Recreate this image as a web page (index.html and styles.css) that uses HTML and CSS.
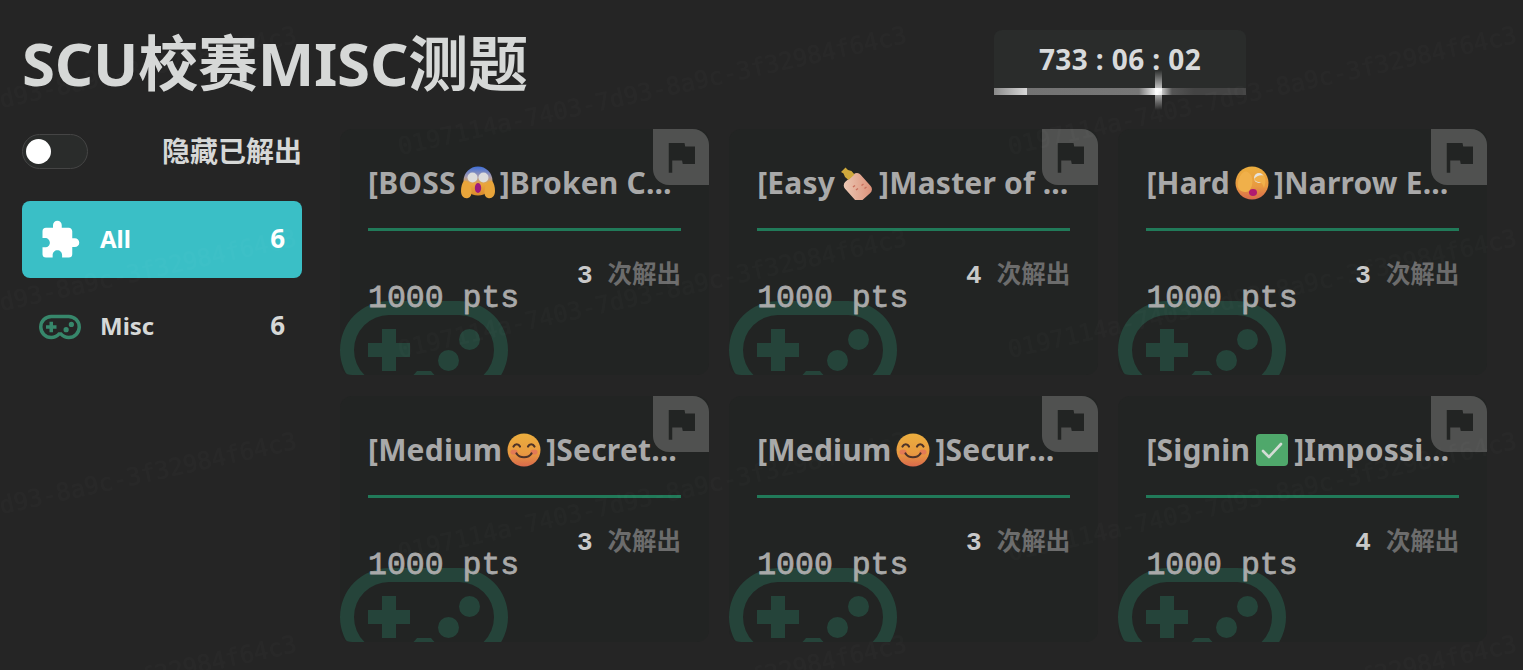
FILE: index.html
```html
<!DOCTYPE html>
<html lang="zh-CN">
  <head>
    <meta charset="utf-8" />
    <title>SCU校赛MISC测题</title>
    <link rel="stylesheet" href="styles.css">
  </head>

  <body>
    <!-- shared icons and emoji -->
    <svg class="defs" width="0" height="0" aria-hidden="true">
      <defs>
        <linearGradient id="g-scream" x1="0" y1="0" x2="0" y2="1">
          <stop offset="0" stop-color="#3f6fd8" />
          <stop offset="0.35" stop-color="#a59bb0" />
          <stop offset="0.6" stop-color="#eaa63f" />
          <stop offset="1" stop-color="#d98a2c" />
        </linearGradient>
        <linearGradient id="g-face" x1="0" y1="0" x2="0" y2="1">
          <stop offset="0" stop-color="#ecae3e" />
          <stop offset="0.6" stop-color="#e89a40" />
          <stop offset="1" stop-color="#d9694c" />
        </linearGradient>
        <linearGradient id="g-bottle" x1="0" y1="0" x2="1" y2="1">
          <stop offset="0" stop-color="#ecccb8" />
          <stop offset="1" stop-color="#dc8d75" />
        </linearGradient>
        <symbol id="i-gamepad" viewBox="0 0 24 24">
          <path d="M6,9H8V11H10V13H8V15H6V13H4V11H6V9M18.5,9A1.5,1.5 0 0,1 20,10.5A1.5,1.5 0 0,1 18.5,12A1.5,1.5 0 0,1 17,10.5A1.5,1.5 0 0,1 18.5,9M15.5,12A1.5,1.5 0 0,1 17,13.5A1.5,1.5 0 0,1 15.5,15A1.5,1.5 0 0,1 14,13.5A1.5,1.5 0 0,1 15.5,12M17,5A7,7 0 0,1 24,12A7,7 0 0,1 17,19C15.04,19 13.27,18.2 12,16.9C10.73,18.2 8.96,19 7,19A7,7 0 0,1 0,12A7,7 0 0,1 7,5H17M7,7A5,5 0 0,0 2,12A5,5 0 0,0 7,17C8.64,17 10.09,16.21 11,15H13C13.91,16.21 15.36,17 17,17A5,5 0 0,0 22,12A5,5 0 0,0 17,7H7Z" fill="currentColor" />
        </symbol>
        <symbol id="i-flag" viewBox="0 0 24 24">
          <path d="M14.4,6L14,4H5V21H7V14H12.6L13,16H20V6H14.4Z" fill="currentColor" />
        </symbol>
        <symbol id="e-scream" viewBox="0 0 34 34">
          <circle cx="17" cy="15" r="14.5" fill="url(#g-scream)" />
          <circle cx="11.5" cy="11.5" r="5" fill="#dcdcdc" />
          <circle cx="22.5" cy="11.5" r="5" fill="#dcdcdc" />
          <ellipse cx="17" cy="22" rx="3.2" ry="5" fill="#9c1a7e" />
          <path d="M3 15c3-1 6 2 7 7 1 4 1 9-3 10-4 1-7-2-7-7 0-4 1-8 3-10zM31 15c-3-1-6 2-7 7-1 4-1 9 3 10 4 1 7-2 7-7 0-4-1-8-3-10z" fill="#e8a53a" />
        </symbol>
        <symbol id="e-bottle" viewBox="0 0 34 34">
          <rect x="7" y="9" width="21" height="25" rx="5" transform="rotate(-42 17.5 21)" fill="url(#g-bottle)" />
          <path d="M1 6 5.5 1.5 8 4l3.5 1 3 3.5-6 5.5-3.5-3-1.5-3.5z" fill="#cfa93c" />
          <path d="M13 21l2-1.5M16 24l2-1.5M21.5 19.5l2-1.5M24.5 22.5l2-1.5" stroke="#c96f5d" stroke-width="1.4" />
        </symbol>
        <symbol id="e-peek" viewBox="0 0 34 34">
          <circle cx="17" cy="17" r="16.5" fill="url(#g-face)" />
          <circle cx="24" cy="12" r="5" fill="#e5e2dc" />
          <circle cx="24.5" cy="13.5" r="2.2" fill="#4a3a30" />
          <ellipse cx="18" cy="26.5" rx="4" ry="3.4" fill="#b01a70" />
          <path d="M3 21c-1-5 2-13 6-15 2-1 4 0 5 1 3 2 4 7 3 12-1 4-3 7-6 7-3 0-7-1-8-5z" fill="#f0b04a" />
          <path d="M19 13c3-4 9-5 11-2 1 3 0 8-1 11-1-4-3-6-5-6-2 0-4-1-5-3z" fill="#f0b04a" />
        </symbol>
        <symbol id="e-smile" viewBox="0 0 34 34">
          <circle cx="17" cy="17" r="16.5" fill="url(#g-face)" />
          <ellipse cx="7" cy="19" rx="3.6" ry="2.6" fill="#de5f66" opacity="0.55" />
          <ellipse cx="27" cy="19" rx="3.6" ry="2.6" fill="#de5f66" opacity="0.55" />
          <path d="M6.5 13.5c1.5-3 5-3 6.5 0M21 13.5c1.5-3 5-3 6.5 0M9.5 20.5c3 5 12 5 15 0" fill="none" stroke="#4d3328" stroke-width="2.2" stroke-linecap="round" />
        </symbol>
        <symbol id="e-check" viewBox="0 0 34 34">
          <rect x="1" y="1" width="32" height="32" rx="4" fill="#4fa86b" />
          <path d="M8 18l6 6L26 11" fill="none" stroke="#d3dcd5" stroke-width="2.6" stroke-linecap="round" stroke-linejoin="round" />
        </symbol>
      </defs>
    </svg>

    <header class="top">
      <h1 class="page-title">SCU校赛MISC测题</h1>
      <div class="timer">
        <div class="timer-text">733 : 06 : 02</div>
        <div class="timer-bar"><span class="spark"></span></div>
      </div>
    </header>

    <main class="layout">
      <aside class="sidebar">
        <div class="hide-solved">
          <span class="toggle"><span class="thumb"></span></span>
          <span class="hide-label">隐藏已解出</span>
        </div>
        <nav class="cats">
          <a class="cat active">
            <svg class="cat-icon" viewBox="0 0 24 24"><path d="M20.5,11H19V7C19,5.89 18.1,5 17,5H13V3.5A2.5,2.5 0 0,0 10.5,1A2.5,2.5 0 0,0 8,3.5V5H4A2,2 0 0,0 2,7V10.8H3.5C5,10.8 6.2,12 6.2,13.5C6.2,15 5,16.2 3.5,16.2H2V20A2,2 0 0,0 4,22H7.8V20.5C7.8,19 9,17.8 10.5,17.8C12,17.8 13.2,19 13.2,20.5V22H17A2,2 0 0,0 19,20V16H20.5A2.5,2.5 0 0,0 23,13.5A2.5,2.5 0 0,0 20.5,11Z" fill="currentColor" /></svg>
            <span class="cat-name">All</span>
            <span class="cat-count">6</span>
          </a>
          <a class="cat">
            <svg class="cat-icon green"><use href="#i-gamepad" /></svg>
            <span class="cat-name">Misc</span>
            <span class="cat-count">6</span>
          </a>
        </nav>
      </aside>

      <section class="cards">
        <article class="card">
          <svg class="card-bg"><use href="#i-gamepad" /></svg>
          <div class="flag"><svg class="flag-icon"><use href="#i-flag" /></svg></div>
          <div class="card-body">
            <div class="card-title">[BOSS<svg class="emoji"><use href="#e-scream" /></svg>]Broken Chat</div>
            <div class="card-stats">
              <span class="pts">1000 pts</span>
              <span class="solves"><b>3</b>次解出</span>
            </div>
          </div>
        </article>

        <article class="card">
          <svg class="card-bg"><use href="#i-gamepad" /></svg>
          <div class="flag"><svg class="flag-icon"><use href="#i-flag" /></svg></div>
          <div class="card-body">
            <div class="card-title">[Easy<svg class="emoji"><use href="#e-bottle" /></svg>]Master of Stego</div>
            <div class="card-stats">
              <span class="pts">1000 pts</span>
              <span class="solves"><b>4</b>次解出</span>
            </div>
          </div>
        </article>

        <article class="card">
          <svg class="card-bg"><use href="#i-gamepad" /></svg>
          <div class="flag"><svg class="flag-icon"><use href="#i-flag" /></svg></div>
          <div class="card-body">
            <div class="card-title">[Hard<svg class="emoji"><use href="#e-peek" /></svg>]Narrow Escape</div>
            <div class="card-stats">
              <span class="pts">1000 pts</span>
              <span class="solves"><b>3</b>次解出</span>
            </div>
          </div>
        </article>

        <article class="card">
          <svg class="card-bg"><use href="#i-gamepad" /></svg>
          <div class="flag"><svg class="flag-icon"><use href="#i-flag" /></svg></div>
          <div class="card-body">
            <div class="card-title">[Medium<svg class="emoji"><use href="#e-smile" /></svg>]Secret Message</div>
            <div class="card-stats">
              <span class="pts">1000 pts</span>
              <span class="solves"><b>3</b>次解出</span>
            </div>
          </div>
        </article>

        <article class="card">
          <svg class="card-bg"><use href="#i-gamepad" /></svg>
          <div class="flag"><svg class="flag-icon"><use href="#i-flag" /></svg></div>
          <div class="card-body">
            <div class="card-title">[Medium<svg class="emoji"><use href="#e-smile" /></svg>]Secure Channel</div>
            <div class="card-stats">
              <span class="pts">1000 pts</span>
              <span class="solves"><b>3</b>次解出</span>
            </div>
          </div>
        </article>

        <article class="card">
          <svg class="card-bg"><use href="#i-gamepad" /></svg>
          <div class="flag"><svg class="flag-icon"><use href="#i-flag" /></svg></div>
          <div class="card-body">
            <div class="card-title">[Signin<svg class="emoji"><use href="#e-check" /></svg>]Impossible Task</div>
            <div class="card-stats">
              <span class="pts">1000 pts</span>
              <span class="solves"><b>4</b>次解出</span>
            </div>
          </div>
        </article>
      </section>
    </main>

    <!-- user id watermark, tiled over the whole page -->
    <svg class="watermark" width="1523" height="670" aria-hidden="true">
      <defs>
        <pattern id="wm" x="390" y="0" width="610" height="203" patternUnits="userSpaceOnUse">
          <text x="10" y="155" transform="rotate(-12.5 10 155)">0197114a-7403-7d93-8a9c-3f32984f64c3</text>
        </pattern>
      </defs>
      <rect width="1523" height="670" fill="url(#wm)" />
    </svg>
  </body>
</html>
```

FILE: styles.css
```css
html,
body {
  margin: 0;
  height: 100%;
  overflow: hidden;
}

body {
  background: #252525;
  color: #d6d8d7;
  font-family: "Noto Sans", "Noto Sans CJK SC", sans-serif;
  font-weight: 700;
}

.defs {
  display: block;
  height: 0;
}

/* Header */

.top {
  display: flex;
  align-items: flex-start;
  padding: 30px 0 0 22px;
  height: 70px;
  margin-bottom: 29px;
}

.page-title {
  margin: -2px 0 0;
  width: 972px;
  font-size: 60px;
  line-height: 70px;
  letter-spacing: -0.25px;
  font-weight: 700;
  white-space: nowrap;
}

.timer {
  position: relative;
  width: 252px;
  height: 65px;
  background: #2a2c2b;
  border-radius: 8px 8px 0 0;
  text-align: center;
}

.timer-text {
  height: 58px;
  font-size: 28px;
  line-height: 58px;
  letter-spacing: 0.4px;
  color: #d8dadb;
}

.timer-bar {
  position: relative;
  height: 7px;
  background: linear-gradient(
    to right,
    #8a8a8a 0,
    #d8d8d8 33px,
    #737373 33px,
    #777 145px,
    #fff 163px,
    #555 178px,
    #444 200px,
    #444 100%
  );
}

.spark {
  position: absolute;
  left: 161px;
  top: -18px;
  width: 7px;
  height: 40px;
  background: linear-gradient(
    to bottom,
    rgba(255, 255, 255, 0),
    rgba(255, 255, 255, 0.7) 45%,
    #fff 50%,
    rgba(255, 255, 255, 0.7) 55%,
    rgba(255, 255, 255, 0)
  );
}

/* Page layout */

.layout {
  display: flex;
  gap: 38px;
  padding: 0 35px 0 22px;
}

.sidebar {
  flex: 0 0 280px;
  padding-top: 5px;
}

.hide-solved {
  display: flex;
  align-items: center;
  justify-content: space-between;
  height: 35px;
}

.toggle {
  display: flex;
  align-items: center;
  box-sizing: border-box;
  width: 66px;
  height: 35px;
  padding-left: 3px;
  background: #2a2c2b;
  border: 1px solid #454545;
  border-radius: 18px;
}

.thumb {
  width: 25px;
  height: 25px;
  background: #fff;
  border-radius: 50%;
}

.hide-label {
  font-size: 28px;
  line-height: 35px;
}

.cats {
  display: flex;
  flex-direction: column;
  gap: 10px;
  margin-top: 32px;
}

.cat {
  display: flex;
  align-items: center;
  height: 77px;
  padding: 0 17px;
  border-radius: 8px;
  font-size: 24px;
}

.cat.active {
  background: #3abfc6;
  color: #fff;
}

.cat-icon {
  width: 42px;
  height: 42px;
  margin-right: 19px;
}

.cat-icon.green {
  color: #37876b;
}

.cat-name {
  flex: 1;
  padding-bottom: 3px;
}

.cat-count {
  padding-bottom: 3px;
  font-size: 26px;
}

/* Challenge cards */

.cards {
  flex: 1;
  display: grid;
  grid-template-columns: repeat(3, 369px);
  grid-auto-rows: 246px;
  gap: 21px 20.2px;
}

.card {
  position: relative;
  overflow: hidden;
  background: #222423;
  border-radius: 12px;
}

.card-bg {
  position: absolute;
  left: 0;
  top: 137px;
  width: 168px;
  height: 168px;
  color: #25443a;
}

.flag {
  position: absolute;
  top: 0;
  right: 0;
  z-index: 2;
  display: flex;
  align-items: center;
  justify-content: center;
  width: 56px;
  height: 56px;
  background: #505150;
  border-radius: 0 16px 0 16px;
}

.flag-icon {
  width: 42px;
  height: 42px;
  color: #222423;
}

.card-body {
  position: relative;
  z-index: 1;
  padding: 34px 28px 0;
}

.card-title {
  height: 40px;
  padding-bottom: 25px;
  border-bottom: 3px solid #217a59;
  font-size: 30px;
  line-height: 40px;
  letter-spacing: 0.2px;
  color: #a9a9a9;
  white-space: nowrap;
  overflow: hidden;
  text-overflow: ellipsis;
}

.emoji {
  width: 34px;
  height: 34px;
  margin: 0 5px;
  vertical-align: -6px;
}

.card-stats {
  display: flex;
  justify-content: space-between;
  align-items: flex-start;
  padding-top: 30px;
}

.pts {
  margin-top: 20px;
  font-family: "Liberation Mono", monospace;
  font-size: 31.5px;
  line-height: 36px;
  font-weight: 400;
  color: #a9a9a9;
  -webkit-text-stroke: 0.8px #a9a9a9;
}

.solves {
  margin-top: -2px;
  font-size: 24.5px;
  line-height: 30px;
  color: #6c6c6c;
}

.solves b {
  margin-right: 15px;
  font-family: "Liberation Mono", monospace;
  font-size: 26px;
  color: #c9c9c9;
}

/* Watermark */

.watermark {
  position: absolute;
  left: 0;
  top: 0;
  pointer-events: none;
  z-index: 5;
}

.watermark text {
  font-family: "DejaVu Sans Mono", monospace;
  font-size: 24px;
  font-weight: 400;
  fill: rgba(255, 255, 255, 0.014);
}
```
